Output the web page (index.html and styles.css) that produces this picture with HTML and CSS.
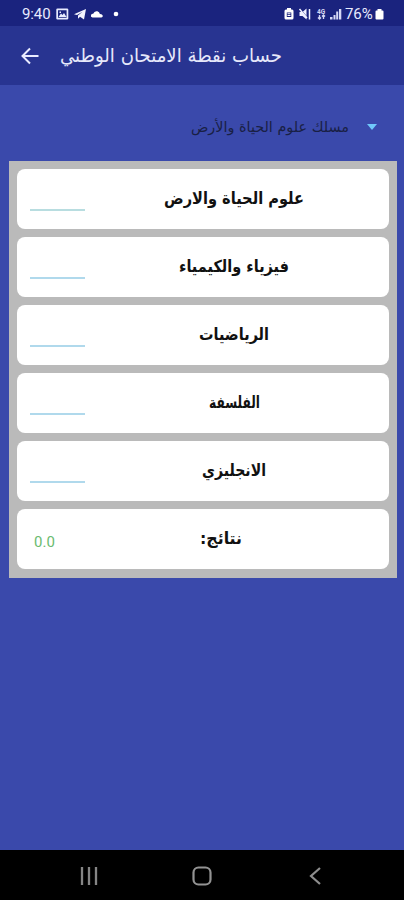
FILE: index.html
```html
<!DOCTYPE html>
<html lang="ar">
<head>
<meta charset="utf-8">
<title>حساب نقطة الامتحان الوطني</title>
<link rel="stylesheet" href="styles.css">
</head>
<body>
<div class="status">
  <span class="time">9:40</span>
  <svg class="left-icons" width="64" height="14" viewBox="0 0 64 14">
    <path fill="#e8ebff" fill-rule="evenodd" d="M1.500 1.500h9.500q1.300 0 1.300 1v9q0 1-1.300 1h-9.500q-1.200 0-1.200-1v-9q0-1 1.200-1zM2 3.200v7.600h8.600v-7.600zM2.500 10l2.500-3.500 1.500 1.500 1.500-2 2.500 4zM3.500 4.500h1.500v1.500h-1.500z"/>
    <path fill="#f4f5ff" d="M18 7.300L30 2l-2 10.500-4-2.800-2 2v-3.200l4.500-3.700-5.500 3.300z"/>
    <path fill="#fff" d="M36.500 10.500q-2.200-.5-1.500-2.500.7-1.300 2.200-1.200 1.200-3.200 4.200-2.500 2 .5 2.500 2.800 2.500-.1 2.900 1.700.1 1.500-1.500 1.700z"/>
    <circle cx="60" cy="7" r="2.300" fill="#fff"/>
  </svg>
  <svg class="right-icons" width="60" height="14" viewBox="0 0 60 14">
    <path fill="#fff" fill-rule="evenodd" d="M3 1h4v1.500h1q1.500 0 1.500 1.500v7q0 1.500-1.500 1.500h-6q-1.500 0-1.500-1.500v-7q0-1.500 1.500-1.500h1zM2.800 5.500v4.500h4.500v-4.500zM3.500 8h3v1h-3zM3.500 6.200h3v1h-3z"/>
    <path fill="#f0f1ff" d="M15.500 5h3l4-3.500v11l-4-3.500h-3z"/>
    <path stroke="#1c2480" stroke-width="1" d="M16 2l8 9"/>
    <path stroke="#f0f1ff" stroke-width="1.500" d="M15.500 2l7.500 9M25.500 2v10.500"/>
    <g class="net"><text x="33" y="6.500">4G</text></g>
    <path stroke="#d5d8f5" stroke-width="1.400" fill="none" d="M35.500 8v4m-1.500-1.500l1.500 1.500 1.500-1.500M39.500 12v-4m-1.500 1.500l1.500-1.500 1.500 1.500"/>
    <path fill="#d5d8f5" d="M46 10h2.500v2.500h-2.500zM49.500 8h2v4.500h-2zM52.200 4.500h2v8h-2zM55 2h2.300v10.500h-2.300z"/>
  </svg>
  <span class="percent">76%</span>
  <svg class="battery" width="9" height="12" viewBox="0 0 9 12"><path fill="#fff" d="M2.500 1h4v1.500h1q1 0 1 1v7q0 1-1 1h-6q-1 0-1-1v-7q0-1 1-1h1z"/></svg>
</div>
<header class="bar">
  <svg class="back" width="20" height="18" viewBox="0 0 20 18"><path d="M18.500 9H3M10 1.500L2.500 9l7.500 7.500" fill="none" stroke="#e9ebff" stroke-width="2"/></svg>
  <svg class="title" width="224" height="36"><text x="223" y="23.500" direction="rtl" textLength="222" lengthAdjust="spacingAndGlyphs">حساب نقطة الامتحان الوطني</text></svg>
</header>
<div class="select">
  <svg width="158" height="24"><text x="157" y="16.500" direction="rtl" textLength="158" lengthAdjust="spacingAndGlyphs">مسلك علوم الحياة والأرض</text></svg>
  <i class="caret"></i>
</div>
<main class="panel">
  <div class="card"><span class="field soft"></span><svg class="label" width="160" height="34"><text x="150" y="22" direction="rtl" textLength="140" lengthAdjust="spacingAndGlyphs">علوم الحياة والارض</text></svg></div>
  <div class="card"><span class="field"></span><svg class="label" width="160" height="34"><text x="135" y="22" direction="rtl" textLength="110" lengthAdjust="spacingAndGlyphs">فيزياء والكيمياء</text></svg></div>
  <div class="card"><span class="field"></span><svg class="label" width="160" height="34"><text x="115" y="22" direction="rtl" textLength="70" lengthAdjust="spacingAndGlyphs">الرياضيات</text></svg></div>
  <div class="card"><span class="field"></span><svg class="label" width="160" height="34"><text x="106" y="22" direction="rtl" textLength="51" lengthAdjust="spacingAndGlyphs">الفلسفة</text></svg></div>
  <div class="card"><span class="field"></span><svg class="label" width="160" height="34"><text x="112" y="22" direction="rtl" textLength="64" lengthAdjust="spacingAndGlyphs">الانجليزي</text></svg></div>
  <div class="card"><span class="result">0.0</span><svg class="label" width="160" height="34"><text x="88" y="22" direction="rtl" textLength="42" lengthAdjust="spacingAndGlyphs">نتائج:</text></svg></div>
</main>
<nav class="nav">
  <svg width="18" height="18" viewBox="0 0 18 18"><path d="M2 0v18M9 0v18M16 0v18" stroke="#858585" stroke-width="2.300"/></svg>
  <svg width="20" height="20" viewBox="0 0 20 20"><rect x="1.500" y="1.500" width="17" height="17" rx="5" fill="none" stroke="#939393" stroke-width="2.200"/></svg>
  <svg width="12" height="18" viewBox="0 0 12 18"><path d="M11 1L2 9l9 8" fill="none" stroke="#8d8d8d" stroke-width="2.200"/></svg>
</nav>
</body>
</html>
```
FILE: styles.css
```css
* { box-sizing: border-box; }
body {
  margin: 0;
  width: 404px;
  height: 900px;
  display: flex;
  flex-direction: column;
  overflow: hidden;
  background: #3a49ab;
  font-family: Roboto, "DejaVu Sans", sans-serif;
}
svg { display: block; flex: none; overflow: visible; }
.status {
  height: 26px;
  padding: 1px 20px 0 22px;
  display: flex;
  align-items: center;
  background: #1a237e;
  color: #e8ebff;
  font-size: 15px;
}
.time { width: 34px; letter-spacing: -0.1px; }
.right-icons { margin-left: auto; }
.net text { font: bold 6.500px Roboto, sans-serif; fill: #d5d8f5; }
.percent { width: 28px; margin: 0 2px 0 1px; letter-spacing: -0.1px; }
.bar {
  height: 59px;
  padding-left: 20px;
  display: flex;
  align-items: center;
  background: #283491;
}
.title { margin-left: 19px; }
.title text { font: 19px "DejaVu Sans", sans-serif; fill: #e6e8fa; }
.select {
  height: 76px;
  padding: 7px 27px 0 0;
  display: flex;
  align-items: center;
  justify-content: flex-end;
}
.select text { font: 14.5px "DejaVu Sans", sans-serif; fill: #192044; }
.caret {
  margin-left: 17px;
  border: 5.500px solid transparent;
  border-top: 6px solid #70c8fa;
  border-bottom: 0;
}
.panel {
  width: 387.500px;
  height: 417px;
  margin-left: 9px;
  padding: 8px;
  display: grid;
  grid-template-rows: repeat(6, 60px);
  gap: 8.080px;
  background: #bababa;
}
.card {
  padding: 0 13px;
  display: flex;
  align-items: center;
  border-radius: 8px;
  background: #fff;
}
.field {
  width: 55px;
  height: 2px;
  margin-top: 22px;
  background: #b0d9ec;
}
.soft { background: #b8dde0; }
.label { margin-left: 69px; }
.label text { font: bold 16.500px "DejaVu Sans", sans-serif; fill: #111; }
.result {
  width: 55px;
  padding: 5px 0 0 4px;
  color: #6abb70;
  font-size: 15px;
}
.nav {
  height: 50px;
  margin-top: auto;
  padding: 1px 83px 0 80px;
  display: grid;
  grid-template-columns: 112px 1fr auto;
  align-items: center;
  background: #000;
}
```
